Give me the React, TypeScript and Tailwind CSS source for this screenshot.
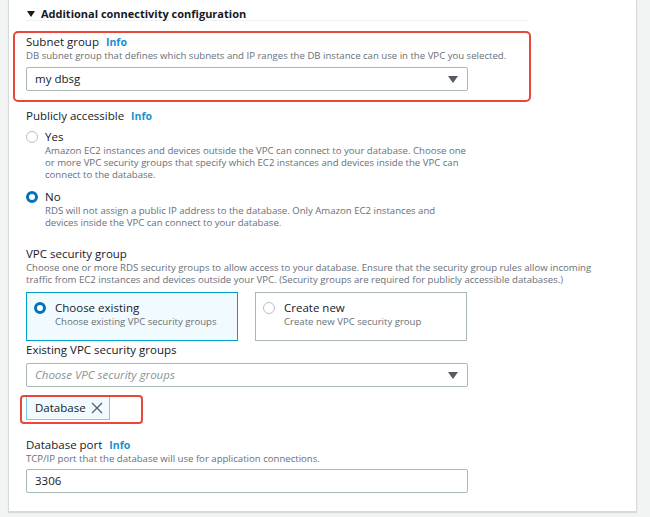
import React from 'react';

const font = { fontFamily: '"Open Sans", "Noto Sans", sans-serif' };

function Info() {
  return <span className="ml-[7px] text-[10.5px] font-bold text-[#1a8fd0]">Info</span>;
}

function Label({ children }: { children: React.ReactNode }) {
  return (
    <div className="flex items-baseline h-[16px] leading-[16px] text-[11.5px] text-[#16191f]">{children}</div>
  );
}

function Desc({ children, className = '' }: { children: React.ReactNode; className?: string }) {
  return <p className={`text-[9.6px] leading-[12px] text-[#687078] ${className}`}>{children}</p>;
}

function Caret() {
  return (
    <svg width="10" height="7" viewBox="0 0 10 7" className="shrink-0">
      <polygon points="0,0 10,0 5,7" fill="#545b64" />
    </svg>
  );
}

function Radio({ checked }: { checked?: boolean }) {
  return checked ? (
    <span className="block w-[12px] h-[12px] rounded-full border-[3.5px] border-[#0073bb] bg-white shrink-0" />
  ) : (
    <span className="block w-[12px] h-[12px] rounded-full border border-[#b8c2c3] bg-white shrink-0" />
  );
}

function Select({ children, placeholder }: { children: React.ReactNode; placeholder?: boolean }) {
  return (
    <div className="flex items-center justify-between w-[442px] h-[24px] border border-[#aab7b8] rounded-[2px] bg-white pl-[8px] pr-[9px]">
      <span className={placeholder ? 'text-[11.5px] italic text-[#879596]' : 'text-[11.5px] text-[#16191f]'}>{children}</span>
      <Caret />
    </div>
  );
}

export default function App() {
  return (
    <div className="w-[650px] h-[517px] bg-[#f2f3f3] pl-[8px] pr-[13px] overflow-hidden" style={font}>
      <div className="h-[512px] bg-white border-x border-b border-[#d5dbdb] shadow-[0_1px_1px_rgba(0,0,0,0.1)] pl-[17px]">
        <div className="flex items-center w-[501px] h-[21px] pt-[7px] border-b border-[#f0f1f1]">
          <svg width="8" height="6" viewBox="0 0 8 6" className="ml-[1px] mr-[6px]">
            <polygon points="0,0 8,0 4,6" fill="#16191f" />
          </svg>
          <span className="text-[11px] font-bold leading-[16px] text-[#16191f]">Additional connectivity configuration</span>
        </div>

        <div className="mt-[10px] -ml-[13px] w-[518px] border-2 border-[#e8473a] rounded-[5px] pl-[11px] pt-[1px] pb-[9px]">
          <Label>
            Subnet group <Info />
          </Label>
          <Desc>DB subnet group that defines which subnets and IP ranges the DB instance can use in the VPC you selected.</Desc>
          <div className="mt-[5px]">
            <Select>my dbsg</Select>
          </div>
        </div>

        <div className="mt-[6px]">
          <Label>
            Publicly accessible <Info />
          </Label>
        </div>

        <div className="mt-[5px] flex gap-[7px]">
          <div className="pt-[2px]">
            <Radio />
          </div>
          <div>
            <div className="text-[11.5px] leading-[16px] text-[#16191f]">Yes</div>
            <Desc className="w-[424px]">
              Amazon EC2 instances and devices outside the VPC can connect to your database. Choose one or more VPC security groups that specify which EC2 instances and devices inside the VPC can connect to the database.
            </Desc>
          </div>
        </div>

        <div className="mt-[8px] flex gap-[7px]">
          <div className="pt-[2px]">
            <Radio checked />
          </div>
          <div>
            <div className="text-[11.5px] leading-[16px] text-[#16191f]">No</div>
            <Desc className="w-[424px]">
              RDS will not assign a public IP address to the database. Only Amazon EC2 instances and devices inside the VPC can connect to your database.
            </Desc>
          </div>
        </div>

        <div className="mt-[17px]">
          <Label>VPC security group</Label>
          <Desc className="w-[580px]">
            Choose one or more RDS security groups to allow access to your database. Ensure that the security group rules allow incoming traffic from EC2 instances and devices outside your VPC. (Security groups are required for publicly accessible databases.)
          </Desc>
        </div>

        <div className="mt-[6px] flex gap-[17px]">
          <div className="flex gap-[9px] w-[212px] h-[49px] border border-[#00a1c9] bg-[#f1faff] pl-[7px] pt-[7px]">
            <div className="pt-[2px]">
              <Radio checked />
            </div>
            <div>
              <div className="text-[11.5px] leading-[16px] text-[#16191f]">Choose existing</div>
              <Desc>Choose existing VPC security groups</Desc>
            </div>
          </div>
          <div className="flex gap-[9px] w-[212px] h-[49px] border border-[#aab7b8] bg-white pl-[7px] pt-[7px]">
            <div className="pt-[2px]">
              <Radio />
            </div>
            <div>
              <div className="text-[11.5px] leading-[16px] text-[#16191f]">Create new</div>
              <Desc>Create new VPC security group</Desc>
            </div>
          </div>
        </div>

        <div className="mt-[1px]">
          <Label>Existing VPC security groups</Label>
        </div>
        <div className="mt-[5px]">
          <Select placeholder>Choose VPC security groups</Select>
        </div>

        <div className="mt-[9px] relative w-[84px]">
          <div className="flex items-center justify-between h-[24px] border border-[#7fc9e3] bg-[#f1faff] pl-[8px] pr-[6px]">
            <span className="text-[11.5px] text-[#16191f]">Database</span>
            <svg width="12" height="12" viewBox="0 0 12 12">
              <path d="M1 1 L11 11 M11 1 L1 11" stroke="#545b64" strokeWidth="1.2" />
            </svg>
          </div>
          <div className="absolute -left-[6px] -top-[1px] w-[123px] h-[29px] border-2 border-[#e8473a] rounded-[4px]" />
        </div>

        <div className="mt-[17px]">
          <Label>
            Database port <Info />
          </Label>
          <Desc>TCP/IP port that the database will use for application connections.</Desc>
        </div>
        <div className="mt-[4px] flex items-center w-[442px] h-[24px] border border-[#aab7b8] rounded-[2px] pl-[8px] text-[11.5px] text-[#16191f]">
          3306
        </div>
      </div>
    </div>
  );
}
